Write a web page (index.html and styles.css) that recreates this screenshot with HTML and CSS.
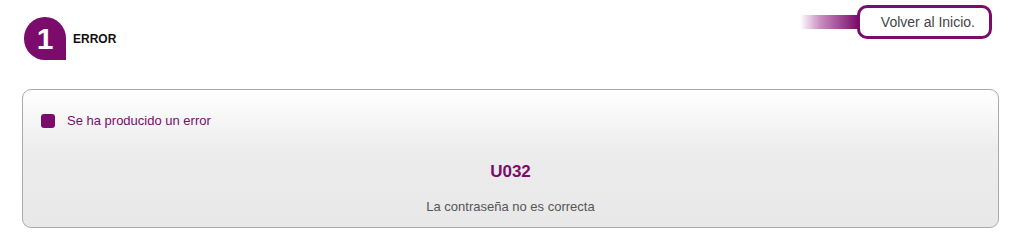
FILE: index.html
```html
<!DOCTYPE html>
<html lang="es">
<head>
<meta charset="utf-8">
<title>Error</title>
<link rel="stylesheet" href="styles.css">
</head>
<body>
<div class="header">
  <div class="step">
    <div class="badge">1</div>
    <div class="step-title">ERROR</div>
  </div>
  <div class="back">
    <div class="back-bar"></div>
    <a class="back-btn" href="#">Volver al Inicio.</a>
  </div>
</div>
<div class="panel">
  <div class="panel-head">
    <span class="check"></span>
    <span class="panel-title">Se ha producido un error</span>
  </div>
  <div class="code">U032</div>
  <div class="msg">La contraseña no es correcta</div>
</div>
</body>
</html>
```
FILE: styles.css
```css
html, body {
  margin: 0;
  padding: 0;
  background: #fff;
  font-family: "Liberation Sans", Arial, sans-serif;
}
.header {
  display: flex;
  justify-content: space-between;
  align-items: flex-start;
  height: 89px;
  padding: 0 27px 0 24px;
  box-sizing: border-box;
}
.step {
  display: flex;
  align-items: center;
  margin-top: 17px;
  gap: 7px;
}
.badge {
  width: 42px;
  height: 43px;
  background: #7b0c6c;
  border-radius: 21px 21px 0 21px;
  color: #fff;
  font-size: 30px;
  font-weight: bold;
  line-height: 43px;
  text-align: center;
}
.step-title {
  font-size: 12px;
  font-weight: bold;
  color: #111;
}
.back {
  display: flex;
  align-items: center;
  margin-top: 5px;
}
.back-bar {
  width: 58px;
  height: 14px;
  margin-right: -1px;
  background: linear-gradient(to right, #ffffff 0%, #c88ec0 35%, #7b0c6c 100%);
}
.back-btn {
  display: block;
  width: 115px;
  height: 28px;
  border: 3px solid #7b0c6c;
  border-radius: 10px;
  background: #fff;
  color: #444;
  font-size: 14px;
  line-height: 28px;
  text-align: right;
  padding-right: 14px;
  box-sizing: content-box;
  text-decoration: none;
}
.panel {
  margin: 0 20px 0 22px;
  height: 139px;
  box-sizing: border-box;
  border: 1px solid #aaaaaa;
  border-radius: 9px;
  background: linear-gradient(to bottom, #ffffff 0%, #f7f7f7 20%, #ececec 45%, #e8e8e8 100%);
  padding: 23px 18px 0 18px;
}
.panel-head {
  display: flex;
  align-items: center;
  gap: 12px;
}
.check {
  width: 14px;
  height: 14px;
  background: #7b0c6c;
  border-radius: 3px;
}
.panel-title {
  color: #7b0c6c;
  font-size: 13px;
}
.code {
  text-align: center;
  color: #7b0c6c;
  font-size: 17px;
  font-weight: bold;
  margin-top: 34px;
}
.msg {
  text-align: center;
  color: #555;
  font-size: 13px;
  margin-top: 17px;
}
```
